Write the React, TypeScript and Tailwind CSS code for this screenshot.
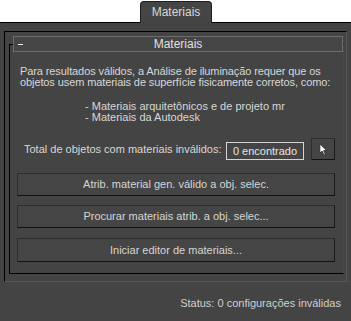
import React from "react";

function CursorIcon() {
  return (
    <svg width="9" height="13" viewBox="0 0 10 14">
      <path d="M1 1 L1 11 L3.5 8.7 L5.5 13 L7 12.3 L5.1 8.2 L8.4 8.2 Z" fill="#ffffff" stroke="#222" strokeWidth="0.8" />
    </svg>
  );
}

function Btn({ children, className = "" }: { children: React.ReactNode; className?: string }) {
  return (
    <div
      className={`ml-[7px] w-[318px] h-[23px] flex items-center justify-center border border-[#2e2e2e] border-b-[#121212] border-r-[#1a1a1a] bg-[#454545] text-[#d6d6d6] ${className}`}
    >
      {children}
    </div>
  );
}

export default function App() {
  return (
    <div
      className="w-[351px] h-[321px] bg-white overflow-hidden text-[11px] leading-[11px] text-[#d8d8d8]"
      style={{ fontFamily: '"Liberation Sans", Arial, sans-serif' }}
    >
      <div className="h-[22px] flex">
        <div className="relative z-10 ml-[140px] mt-[1px] w-[72px] h-[22px] rounded-t-[4px] border border-b-0 border-[#1e1e1e] bg-[#454545] flex items-center justify-center pb-[1px] text-[#d8d8d8] text-[12px]">
          Materiais
        </div>
      </div>
      <div className="h-[299px] bg-[#444444] border-t border-black">
        <div className="ml-[4px] mt-[8px] w-[343px] h-[251px] border border-black border-r-[#555555] border-b-[#555555] pl-[4px] pt-[4px]">
          <div className="relative z-10 ml-[4px] w-[330px] h-[16px] border border-[#6c6c6c] bg-[#464646] flex items-center">
            <span className="ml-[4px] w-[5px] h-[1px] mt-[1px] bg-[#f0f0f0]"></span>
            <span className="flex-1 text-center pr-[9px] text-[12px] text-[#e0e0e0]">Materiais</span>
          </div>
          <div className="-mt-[8px] w-[335px] h-[230px] border-l border-t border-b border-black border-r border-r-[#4a4a4a] pt-[21px]">
            <p className="pl-[10px] tracking-[-0.1px]">
              Para resultados válidos, a Análise de iluminação requer que os
              <br />
              objetos usem materiais de superfície fisicamente corretos, como:
            </p>
            <div className="mt-[13px] pl-[75px]">
              <div>- Materiais arquitetônicos e de projeto mr</div>
              <div>- Materiais da Autodesk</div>
            </div>
            <div className="mt-[15px] h-[22px] flex items-end">
              <span className="ml-[14px] w-[202px] mb-[5px]">Total de objetos com materiais inválidos:</span>
              <div className="w-[78px] h-[18px] border border-[#d4d4d4] flex items-center justify-center text-[#e4e4e4]">
                0 encontrado
              </div>
              <div className="ml-[7px] w-[24px] h-[22px] border border-[#2e2e2e] border-b-[#121212] border-r-[#1a1a1a] bg-[#454545] flex items-center justify-center">
                <CursorIcon />
              </div>
            </div>
            <Btn className="mt-[13px]">Atrib. material gen. válido a obj. selec.</Btn>
            <Btn className="mt-[9px]">Procurar materiais atrib. a obj. selec...</Btn>
            <Btn className="mt-[10px] h-[24px]">Iniciar editor de materiais...</Btn>
          </div>
        </div>
        <div className="mt-[16px] pr-[10px] text-right text-[#d0d0d0]">Status: 0 configurações inválidas</div>
      </div>
    </div>
  );
}
